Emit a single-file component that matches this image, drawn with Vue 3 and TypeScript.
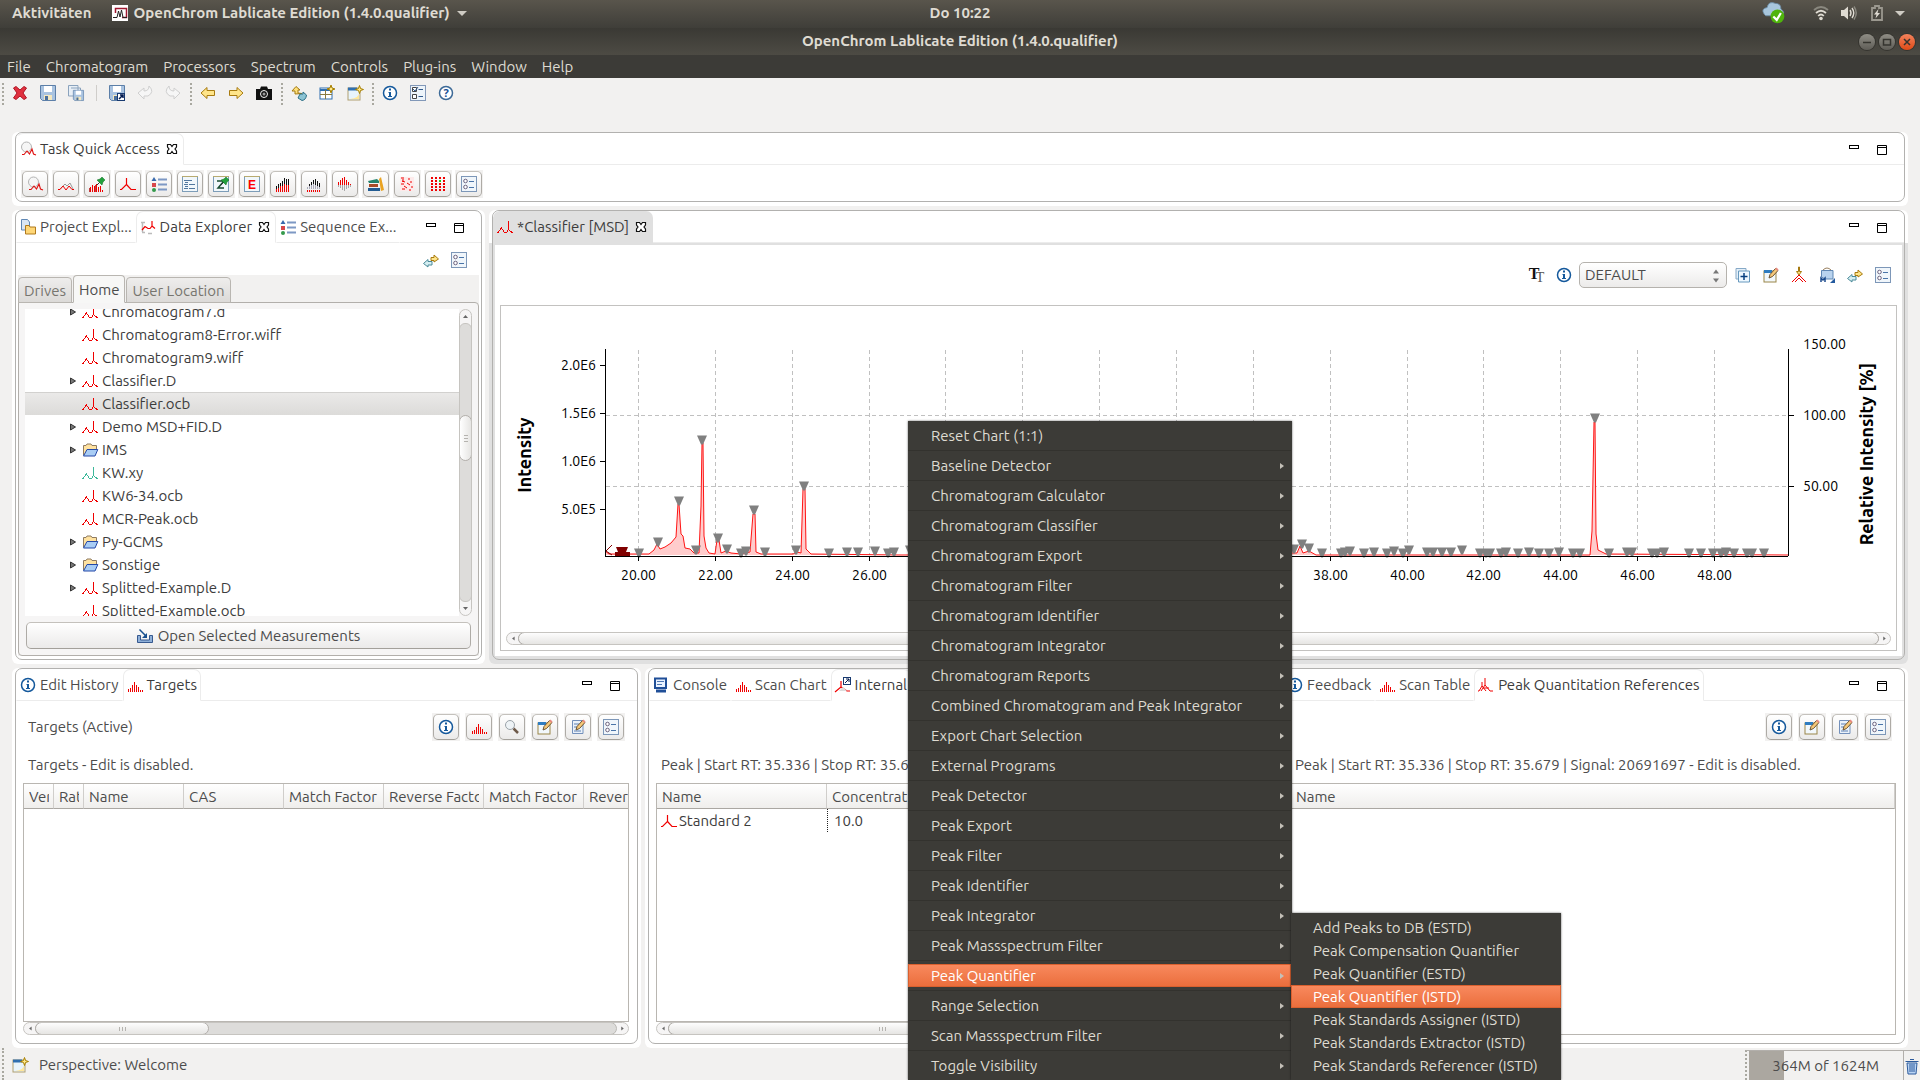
<script setup lang="ts">
import { h, ref } from 'vue'

const RED = '#f00000'
const line = (d: string, c: string, w = 1) =>
  `<path d="${d}" fill="none" stroke="${c}" stroke-width="${w}"/>`
const crisp = (d: string, c: string) =>
  `<path d="${d}" fill="none" stroke="${c}" shape-rendering="crispEdges"/>`
const box = (x: number, y: number, w: number, hh: number, c: string) =>
  `<rect x="${x}" y="${y}" width="${w}" height="${hh}" fill="${c}"/>`
const star = (x: number, y: number) =>
  `<path d="M${x} ${y - 4}L${x + 1} ${y - 1}L${x + 4} ${y}L${x + 1} ${y + 1}L${x} ${y + 4}L${x - 1} ${y + 1}L${x - 4} ${y}L${x - 1} ${y - 1}Z" fill="#ffe98a" stroke="#a87f00"/>`
const bars = (items: number[][], c: string) =>
  items.map(([x, y, hh]) => box(x, y, 1, hh, c)).join('')
const traceShape = 'M0 13.500H1L4.500 9L7.500 13.500H9.500L11.500 10.500V2V10.500L15.500 14'
const floppy = (x: number, y: number, s: number) =>
  `<g transform="translate(${x} ${y}) scale(${s})"><path d="M.5.5H15.500V15.500H2.500L.5 13.500Z" fill="#a9c3e0" stroke="#5c7fa8"/><rect x="4" y="1" width="8" height="6" fill="#fff"/><rect x="4" y="10" width="8" height="5" fill="#f4e8c0"/><rect x="5" y="11" width="3" height="4" fill="#4a6f9c"/></g>`
const pencil =
  '<path d="M6 11L7 7.500L12.500 1.500L15 3.500L9.500 9.500Z" fill="#f6c878" stroke="#6b5433"/><path d="M12 2L13.500.5L15.500 2.500L14.500 4Z" fill="#e88a80"/>'
const lens =
  '<circle cx="6" cy="6" r="4.500" fill="#eef3f6" stroke="#9aa2a8"/><path d="M9.500 9.500L14 14" stroke="#6e5a4a" stroke-width="2.500"/>'
const pin =
  '<path d="M8 9L11 6" stroke="#333"/><path d="M8 4L13 9L14 6L16 4L13 1L11 3Z" fill="#22a03c" stroke="#0c6a20" stroke-width=".5"/>'
const sheet = '<rect x=".5" y=".5" width="15" height="15" fill="#f1f7fb" stroke="#7d9db8"/><path d="M0 .5H16" stroke="#b8ab70"/>'

const icons: Record<string, string> = {
  del: '<path d="M1.500 3L4 1.500L8 5L12 1.500L14.500 3L11 8L14.500 13L12 14.500L8 11L4 14.500L1.500 13L5 8Z" fill="#e0313f" stroke="#b01524"/>',
  save: floppy(0, 0, 1),
  saveAll: `<path d="M.5.5H10V11H.5ZM3 3H12.500V13" fill="#e8eff6" stroke="#8ba3bd"/>${floppy(5, 5, 0.68)}`,
  saveAs: `${floppy(0, 0, 1)}<rect x="8.500" y="8.500" width="7" height="7" fill="#fff" stroke="#183a70"/>${line('M10 14L14 10M11 10H14V13', '#001a50', 1.5)}`,
  undo: '<path d="M1 8L7 3V6Q12 6 12 1Q18 7 11 11L7 11V14Z" fill="#f6f6f6" stroke="#cfcfcf"/>',
  redo: '<path d="M15 8L9 3V6Q4 6 4 1Q-2 7 5 11L9 11V14Z" fill="#f6f6f6" stroke="#cfcfcf"/>',
  back: '<path d="M1 8L7 2.500V5.500H14.500V10.500H7V13.500Z" fill="#ffe58a" stroke="#a87b10"/>',
  fwd: '<path d="M15 8L9 2.500V5.500H1.500V10.500H9V13.500Z" fill="#ffe58a" stroke="#a87b10"/>',
  camera: '<path d="M0 4H4L5 1.500H11L12 4H16V15H0Z" fill="#111"/><circle cx="8" cy="9" r="3.500" fill="none" stroke="#f2f1f0"/><circle cx="8" cy="9" r="1.500" fill="#999"/>',
  sync: '<path d="M1 6L5 1.500L9 5H7V8L11 8.500L4 9V6Z" fill="#ffe07a" stroke="#a37a12"/><path d="M7 13L9 9H12V7L15.500 10Q15 15 11 15.500Z" fill="#8cc4d4" stroke="#2c6f86"/>',
  persp: `<rect x="1" y="3" width="12" height="11" fill="#fff" stroke="#2f6fb0"/>${line('M1 5H13', '#2f6fb0', 2)}${line('M1 9.500H13M6.500 5V14', '#8a7b40')}${star(12, 4)}`,
  newWin: `<rect x="1" y="3" width="12" height="12" fill="#e8f4fc" stroke="#b0a070"/>${line('M1 4H10', '#2f6fb0', 3)}<path d="M3 14Q12 13 12 8V14Z" fill="#ffe79a"/>${star(12.5, 4.5)}`,
  info: '<circle cx="8" cy="8" r="6.500" fill="#fff" stroke="#15599c" stroke-width="1.500"/><path d="M7 3.500H9V5.500H7ZM6.500 7H9V11H10V12H6V11H7V8H6.500Z" fill="#15599c"/>',
  checks: '<rect x=".5" y=".5" width="15" height="15" fill="#edf4fa" stroke="#8298b8"/><path d="M2.500 2.500H6.500V6.500H2.500ZM2.500 9.500H6.500V13.500H2.500Z" fill="#fff" stroke="#444"/><path d="M3 4L5 6L8 2M8.500 4.500H13M8.500 11.500H13" fill="none" stroke="#325a8c"/>',
  help: '<circle cx="8" cy="8" r="6.500" fill="#fff" stroke="#3d6a97" stroke-width="1.500"/><text x="8" y="12" text-anchor="middle" font-size="11" font-weight="700" font-family="Noto Sans, sans-serif" fill="#174f94">?</text>',
  task: `<circle cx="6.500" cy="6" r="5" fill="#f6f6f6" stroke="#b4b4b4"/>${line('M2 13.500H4L7 10L9.500 13L12 8L13.500 13L16 14', '#e01010', 1.1)}`,
  overlay: `${line('M1 14L7 8L9 10L12 7L15 13', '#999')}${line('M0 13.500H2L5 10L8 14L11 10L14 13.500H16', RED)}`,
  histPin: `${bars([[1, 11, 5], [3, 9, 7], [5, 10, 6], [7, 8, 8], [9, 11, 5], [11, 10, 6], [13, 14, 2]], RED)}${bars([[0, 12, 4], [6, 9, 7]], '#c04040')}${pin}`,
  peak: line('M0 13.500H1.500L6.500 8.500V2M6.500 8.500L11 13.500H16', RED, 1.2),
  list: `${line('M7 3.500H16M7 8.500H16M7 13.500H16', '#7d98c4', 2)}<path d="M3 1L5.500 5H.5Z" fill="#3869ad"/>${box(1, 7, 4, 4, '#d8484c')}<circle cx="3" cy="14" r="2" fill="#349a4c"/>`,
  sheetList: `${sheet}${line('M2 4.500H10M2 8.500H6M7 8.500H13M2 12.500H6M7 12.500H13M3 6.500H6M3 10.500H6', '#51779e')}`,
  sheetPin: `${sheet}<path d="M4 5H11L5 12H11" fill="none" stroke="#174b30" stroke-width="1.500"/>${pin}`,
  sheetE: `${sheet}<text x="8" y="13" text-anchor="middle" font-size="12" font-weight="700" font-family="Liberation Sans, sans-serif" fill="#f00">E</text>`,
  bars1: bars([[1, 10, 3], [3, 8, 4], [5, 7, 3], [7, 5, 5], [9, 2, 6], [11, 3, 6], [13, 3, 6]], '#111') + bars([[1, 13, 3], [3, 12, 4], [5, 10, 6], [7, 10, 6], [9, 8, 8], [11, 9, 7], [13, 9, 7]], RED),
  bars2: bars([[3, 8, 2], [5, 6, 3], [7, 4, 4], [9, 3, 6], [11, 5, 5], [13, 7, 4]], '#111') + bars([[1, 11, 2], [3, 10, 3], [5, 9, 4], [7, 8, 5], [9, 9, 4], [11, 10, 3], [13, 11, 2]], '#aab') + bars([[1, 14, 2], [3, 14, 2], [5, 14, 2], [7, 14, 2], [9, 14, 2], [11, 14, 2], [13, 14, 2]], RED),
  bars3: bars([[1, 6, 3], [3, 4, 5], [5, 2, 7], [7, 1, 8], [9, 4, 5], [11, 6, 3], [13, 8, 1]], RED) + bars([[1, 9, 2], [3, 9, 3], [5, 9, 5], [7, 9, 6], [9, 9, 4], [11, 9, 3], [13, 9, 2]], '#aaa'),
  books: '<path d="M0 5L9 3L11 5V7L1 7Z" fill="#23836c"/><path d="M1 8H10V11H1Z" fill="#a84c28"/><path d="M0 12H12V15H0Z" fill="#235c92"/><path d="M11 3L13 1L16 14L13 15Z" fill="#eaa322"/>',
  noise: `<rect x="1" y="1" width="14" height="14" fill="#fdeaea"/>${line('M2 2H5M9 3H11M3 5L6 6M2 8H5M8 7L11 9M5 10L8 12M3 13H6M12 11H14M10 14H12M4 3V6M12 5V7', RED)}`,
  grid: [0, 1, 2, 3, 4].map((r) => [0, 1, 2, 3].map((c) => box(1 + c * 4, 1 + r * 3, 2, 2, r === 1 && c === 2 ? '#1ccf1c' : RED)).join('')).join(''),
  settings: '<rect x=".5" y=".5" width="15" height="15" fill="#f0f6fb" stroke="#7d97b8"/><circle cx="4.500" cy="5" r="1.800" fill="#fff" stroke="#6d6480"/><circle cx="4.500" cy="11" r="1.800" fill="#fff" stroke="#6d6480"/><path d="M8 5.500H13M8 11.500H13" stroke="#4a74a8"/>',
  close: '<path d="M3.500 3.500H6.500L8 5.500L9.500 3.500H12.500V6L11 8L12.500 10V12.500H9.500L8 10.500L6.500 12.500H3.500V10L5 8L3.500 6Z" fill="#fff" stroke="#111" stroke-width="1.200"/>',
  min: '<rect x="3.500" y="4.500" width="9" height="3" fill="#fff" stroke="#000"/>',
  max: '<path d="M3.500 4.500H12.500V13.500H3.500ZM3.500 6.500H12.500" fill="#fff" stroke="#000"/>',
  project: '<path d="M1.500.5H7.500L9.500 3V11H1.500Z" fill="#d9e6f4" stroke="#5f87b4"/><path d="M5.500 6.500H9L10 8H15.500V15H5.500Z" fill="#ffd777" stroke="#b07a1c"/>',
  data: `${line('M2.500 3V13M1 3.500H5M2 13.500H5M8 14.500H12', '#bbb', 1.5)}${line('M2 11L5 7.500L8 9.500H10L12 7V2M12 7L15 9.500', RED, 1.2)}`,
  link: '<path d="M8 5.500H11V3L15.500 7L11 10V8.500H8Z" fill="#ffe58a" stroke="#a87b10"/><path d="M9 9.500H5V7.500L.5 11.500L5 15V13H9Z" fill="#d5eef2" stroke="#4a8a99"/>',
  trace: crisp(traceShape, RED),
  traceGreen: crisp(traceShape, '#3cb89a'),
  folder: '<path d="M1.500 13V3.500H4L5 2H9L10 3.500H14.500V7" fill="#ffe2a0" stroke="#8f7b60"/><path d="M1.500 14L5 7.500H15.800L13 14Z" fill="#a9cdf5" stroke="#2448a8"/>',
  open: '<path d="M.5 7.500H3.500V12H12.500V7.500H15.500V14.500H.5Z" fill="#8fb0d8" stroke="#36598f"/><path d="M2.500 1.500L9 8" stroke="#17508f" stroke-width="1.500"/><path d="M10 5V10H5Z" fill="#17508f"/>',
  type: '<text x="6" y="12" text-anchor="middle" font-size="16" font-weight="700" font-family="Liberation Serif, serif" fill="#111">T</text><text x="12" y="15" text-anchor="middle" font-size="14" font-family="Liberation Serif, serif" fill="#555">T</text>',
  addWin: '<path d="M1 1.500H11V12H1Z" fill="#e4eff8" stroke="#86a9c7"/><path d="M3.500 4H14.500V15H3.500Z" fill="#eef8ff" stroke="#6798bd"/><path d="M9 6V13M5.500 9.500H12.500" stroke="#073f80" stroke-width="1.500"/>',
  edit: `<rect x="1" y="4" width="12" height="11" fill="#f2f8fc" stroke="#9a8648"/>${line('M1 4.500H9', '#2f7cc0', 3)}${pencil}`,
  editDoc: `<path d="M2.500 1.500H13V14.500H2.500Z" fill="#eaf1f9" stroke="#7390bb"/>${line('M4 5H9M4 8H8M4 12H11', '#5c80b4')}${pencil}`,
  integrate: `<path d="M8 8L5.500 4.500H7.500V0H8.500V4.500H10.500Z" fill="#ffe27a" stroke="#a67a10"/>${line('M1 15L8 8L15 15M4 15L8 11L12 15', RED)}`,
  method: '<path d="M2.500 3.500H14V12H6L2.500 10Z" fill="#b9d3ee" stroke="#5f87b4"/><path d="M4 3Q8-1 12 3" fill="none" stroke="#998060"/><path d="M2 15V11L4 13L6 11V15" fill="none" stroke="#1b4a8c" stroke-width="1.500"/><path d="M16 11V16H11Z" fill="#245a9e"/>',
  hist: bars([[1, 12, 3], [3, 11, 4], [5, 8, 7], [7, 5, 10], [9, 8, 7], [11, 10, 5], [13, 13, 2], [15, 13, 2]], RED),
  lens,
  console: '<path d="M2 1.500H13V11H2Z" fill="#eaf3ff" stroke="#204f98" stroke-width="2"/><path d="M4 4.500H11M4 7.500H9" stroke="#4f78b4"/><path d="M3 14H13" stroke="#204f98" stroke-width="3"/>',
  internal: `${line('M0 15L6 10V4M6 10L12 14H15', RED, 1.2)}<path d="M4 14L8 10L12 14Z" fill="#ddd"/><rect x="8.500" y=".5" width="7" height="7" fill="#fff" stroke="#183a70"/>${line('M10 6L14 2M11 2H14V5', '#001a50')}`,
  refs: line('M0 14H1L4 9V5M4 9L8 14M3 14L7 8V1M7 8L12 14H15M5 11H11', RED),
  trash: '<path d="M3 5H13L12 16H4Z" fill="#b9d3f3" stroke="#2d5b9c"/><path d="M1.500 3.500H14.500M6 1.500H10M6 6V14M8 6V14M10 6V14" stroke="#2d5b9c"/>',
  app: '<rect width="16" height="16" fill="#fff"/><path d="M3.500 8V3.500H14.500V12.500H10" fill="none" stroke="#a01830" stroke-width="1.500"/><path d="M1 12.500H5L6.500 6L8 12L9.500 5L11 12.500H15" fill="none" stroke="#222"/>',
  cloud: '<path d="M1 11Q-2 7 3 6Q4 1 9 3Q13 3 13 7Q17 10 13 12H2Z" fill="#a8c6dc" stroke="#6a8ca5" stroke-width=".6" transform="translate(0 -2)"/><circle cx="10.500" cy="10.500" r="5" fill="#4fb40c"/><path d="M7.500 10.500L10 13L13 8" fill="none" stroke="#fff" stroke-width="1.600"/>',
  wifi: '<path d="M1 5Q8-1 15 5" fill="none" stroke="#8a887f" stroke-width="1.800"/><path d="M3 8Q8 3.500 13 8M5.200 11Q8 8 10.800 11" fill="none" stroke="#dfdbd2" stroke-width="1.800"/><circle cx="8" cy="13.500" r="1.800" fill="#dfdbd2"/>',
  sound: '<path d="M0 5H3L7 1.500V14.500L3 11H0Z" fill="#dfdbd2"/><path d="M9 5Q11 8 9 11M11 3Q14.500 8 11 13" fill="none" stroke="#dfdbd2" stroke-width="1.400"/><path d="M13 1.500Q17.500 8 13 14.500" fill="none" stroke="#8a887f" stroke-width="1.400"/>',
  battery: '<path d="M3 3H6V1H10V3H13V15H3Z" fill="none" stroke="#9b988f" stroke-width="1.800"/><path d="M9.500 4L5 9.500H7.500L6.500 13.500L11 8H8.500Z" fill="#dfdbd2"/>',
  down: '<path d="M3 6H13L8 11Z" fill="#cfccc4"/>',
}

const Ico = (props: { n: string }) =>
  h('svg', { class: 'ico', viewBox: '0 0 16 16', 'aria-hidden': 'true', innerHTML: icons[props.n] })
Ico.props = ['n']

const appMenu = ['File', 'Chromatogram', 'Processors', 'Spectrum', 'Controls', 'Plug-ins', 'Window', 'Help']
const toolGroups = [
  ['del', 'save', 'saveAll', '|', 'saveAs', 'undo', 'redo'],
  ['back', 'fwd', 'camera'],
  ['sync', 'persp', 'newWin'],
  ['info', 'checks', 'help'],
]
const tasks = ['task', 'overlay', 'histPin', 'peak', 'list', 'sheetList', 'sheetPin', 'sheetE', 'bars1', 'bars2', 'bars3', 'books', 'noise', 'grid', 'settings']

interface Tab { icon: string; label: string; active?: boolean; close?: boolean }
const explorerTabs: Tab[] = [
  { icon: 'project', label: 'Project Expl...' },
  { icon: 'data', label: 'Data Explorer', active: true, close: true },
  { icon: 'list', label: 'Sequence Ex...' },
]
const targetTabs: Tab[] = [
  { icon: 'info', label: 'Edit History' },
  { icon: 'hist', label: 'Targets', active: true },
]
const consoleTabs: Tab[] = [
  { icon: 'console', label: 'Console' },
  { icon: 'hist', label: 'Scan Chart' },
  { icon: 'internal', label: 'Internal', active: true },
]
const referenceTabs: Tab[] = [
  { icon: 'info', label: 'Feedback' },
  { icon: 'hist', label: 'Scan Table' },
  { icon: 'refs', label: 'Peak Quantitation References', active: true },
]

const files = [
  { name: 'Chromatogram7.d', icon: 'trace', parent: true },
  { name: 'Chromatogram8-Error.wiff', icon: 'trace' },
  { name: 'Chromatogram9.wiff', icon: 'trace' },
  { name: 'Classifier.D', icon: 'trace', parent: true },
  { name: 'Classifier.ocb', icon: 'trace' },
  { name: 'Demo MSD+FID.D', icon: 'trace', parent: true },
  { name: 'IMS', icon: 'folder', parent: true },
  { name: 'KW.xy', icon: 'traceGreen' },
  { name: 'KW6-34.ocb', icon: 'trace' },
  { name: 'MCR-Peak.ocb', icon: 'trace' },
  { name: 'Py-GCMS', icon: 'folder', parent: true },
  { name: 'Sonstige', icon: 'folder', parent: true },
  { name: 'Splitted-Example.D', icon: 'trace', parent: true },
  { name: 'Splitted-Example.ocb', icon: 'trace' },
]
const selected = ref('Classifier.ocb')

const targetColumns = ['Veri', 'Rati', 'Name', 'CAS', 'Match Factor', 'Reverse Factor', 'Match Factor', 'Reverse']

const menu = [
  'Reset Chart (1:1)', 'Baseline Detector', 'Chromatogram Calculator', 'Chromatogram Classifier',
  'Chromatogram Export', 'Chromatogram Filter', 'Chromatogram Identifier', 'Chromatogram Integrator',
  'Chromatogram Reports', 'Combined Chromatogram and Peak Integrator', 'Export Chart Selection',
  'External Programs', 'Peak Detector', 'Peak Export', 'Peak Filter', 'Peak Identifier',
  'Peak Integrator', 'Peak Massspectrum Filter', 'Peak Quantifier', 'Range Selection',
  'Scan Massspectrum Filter', 'Toggle Visibility',
]
const submenu = [
  'Add Peaks to DB (ESTD)', 'Peak Compensation Quantifier', 'Peak Quantifier (ESTD)',
  'Peak Quantifier (ISTD)', 'Peak Standards Assigner (ISTD)', 'Peak Standards Extractor (ISTD)',
  'Peak Standards Referencer (ISTD)',
]

/* chart geometry */
const xTicks = Array.from({ length: 15 }, (_, i) => ({ x: Math.round(137 + i * 76.86) + 0.5, label: (20 + i * 2).toFixed(2) }))
const labelled = xTicks.filter((_, i) => i < 4 || i > 8)
const yTicks = [[59, '2.0E6'], [107, '1.5E6'], [155, '1.0E6'], [203, '5.0E5']] as [number, string][]
const rTicks = [[38, '150.00'], [109, '100.00'], [180, '50.00']] as [number, string][]
const marks = [
  [137, 247], [156, 236], [177, 195], [194, 244], [200, 134], [216, 232], [225, 243], [239, 247], [244, 245],
  [252, 204], [263, 246], [294, 244], [302, 180], [327, 247], [345, 246], [356, 246], [373, 245], [386, 247],
  [392, 246], [408, 244], [792, 243], [800, 238], [807, 242], [820, 247], [839, 247], [843, 246], [848, 245], [862, 247], [872, 246],
  [885, 247], [892, 245], [901, 247], [907, 244], [925, 246], [931, 246], [940, 246], [949, 246], [960, 244], [978, 247], [984, 247],
  [988, 247], [999, 247], [1004, 246], [1016, 247], [1027, 246], [1037, 247], [1047, 247], [1057, 246], [1071, 247], [1078, 247],
  [1093, 112], [1107, 247], [1125, 246], [1130, 246], [1150, 247], [1155, 247], [1162, 246], [1187, 247], [1199, 247], [1211, 247],
  [1219, 247], [1224, 246], [1232, 247], [1245, 247], [1250, 247], [1262, 247],
]
const tri = ([x, y]: number[]) => `M${x - 4} ${y - 4.5}h10l-4 9h-2z`
const markPath = marks.map(tri).join('')
const trace =
  '104,245 108,248 137,248 148,248 153,244 156,238 159,243 164,241 170,237 175,231 177,198 178,198 180,228 182,230 184,242 189,243 193,247 198,247 200,200 201,137 202,137 203,230 205,242 208,247 214,248 216,234 218,234 220,247 225,245 230,247 240,248 249,246 252,208 254,208 255,246 260,248 292,248 296,246 300,247 302,183 304,183 305,243 310,248 400,249 790,247 796,247 799,240 802,247 808,245 815,249 1089,249 1091,225 1093,116 1094,116 1095,228 1097,244 1105,248 1287,249'
</script>

<template>
  <div class="desktop">
    <header class="panel-bar">
      <div class="side">
        <button class="bar-text">Aktivitäten</button>
        <button class="bar-text app-name"><Ico n="app" />OpenChrom Lablicate Edition (1.4.0.qualifier)<Ico n="down" /></button>
      </div>
      <span class="bar-text">Do 10:22</span>
      <div class="side tray">
        <Ico n="cloud" class="cloud" /><Ico n="wifi" /><Ico n="sound" /><Ico n="battery" /><Ico n="down" />
      </div>
    </header>
    <div class="title-bar">
      <span></span>
      <h1>OpenChrom Lablicate Edition (1.4.0.qualifier)</h1>
      <div class="win-buttons">
        <button aria-label="Minimize"><svg viewBox="0 0 16 16"><path d="M4 8.500H12" /></svg></button>
        <button aria-label="Maximize"><svg viewBox="0 0 16 16"><path d="M4.500 5.500H11.500V11H4.500Z" /></svg></button>
        <button aria-label="Close" class="quit"><svg viewBox="0 0 16 16"><path d="M5 5L11 11M11 5L5 11" /></svg></button>
      </div>
    </div>
    <nav class="menu-bar"><button v-for="m in appMenu" :key="m">{{ m }}</button></nav>

    <div class="toolbar">
      <div v-for="(g, gi) in toolGroups" :key="gi" class="tool-group">
        <template v-for="t in g" :key="t">
          <span v-if="t === '|'" class="tool-sep"></span>
          <button v-else :aria-label="t"><Ico :n="t" /></button>
        </template>
      </div>
    </div>

    <main class="workspace">
      <section class="part">
        <div class="frame">
          <div class="tabs">
            <button class="tab active"><Ico n="task" /><span>Task Quick Access</span><Ico n="close" /></button>
            <div class="tab-rest"><button aria-label="Minimize"><Ico n="min" /></button><button aria-label="Maximize"><Ico n="max" /></button></div>
          </div>
          <div class="task-row">
            <span v-for="t in tasks" :key="t" class="push"><button :aria-label="t"><Ico :n="t" /></button></span>
          </div>
        </div>
      </section>

      <div class="row upper">
        <section class="part">
          <div class="frame">
            <div class="tabs">
              <button v-for="t in explorerTabs" :key="t.label" class="tab" :class="{ active: t.active }">
                <Ico :n="t.icon" /><span>{{ t.label }}</span><Ico v-if="t.close" n="close" />
              </button>
              <div class="tab-rest"><button aria-label="Minimize"><Ico n="min" /></button><button aria-label="Maximize"><Ico n="max" /></button></div>
            </div>
            <div class="view-tools"><button aria-label="Link"><Ico n="link" /></button><button aria-label="Settings"><Ico n="settings" /></button></div>
            <div class="folder">
              <div class="folder-tabs">
                <button>Drives</button><button class="current">Home</button><button>User Location</button>
              </div>
              <div class="folder-body">
                <div class="tree-wrap">
                  <ul class="tree">
                    <li v-for="f in files" :key="f.name">
                      <button :class="{ selected: f.name === selected }" @click="selected = f.name">
                        <svg class="twist" viewBox="0 0 8 8"><path v-if="f.parent" d="M.5 1L5.500 4L.5 7Z" /></svg>
                        <Ico :n="f.icon" />{{ f.name }}
                      </button>
                    </li>
                  </ul>
                  <div class="vbar">
                    <svg class="cap" viewBox="0 0 13 13"><path d="M4 8H9L6.500 5Z" /></svg>
                    <div class="vtrough"><div class="vthumb"><i></i><i></i><i></i></div></div>
                    <svg class="cap" viewBox="0 0 13 13"><path d="M4 5H9L6.500 8Z" /></svg>
                  </div>
                </div>
                <button class="open-btn"><Ico n="open" />Open Selected Measurements</button>
              </div>
            </div>
          </div>
        </section>

        <section class="part editor">
          <div class="frame">
            <div class="tabs">
              <button class="tab active"><Ico n="trace" /><span>*Classifier [MSD]</span><Ico n="close" /></button>
              <div class="tab-rest"><button aria-label="Minimize"><Ico n="min" /></button><button aria-label="Maximize"><Ico n="max" /></button></div>
            </div>
            <div class="editor-body">
              <div class="chart-tools">
                <button aria-label="Fonts"><Ico n="type" /></button>
                <button aria-label="Info"><Ico n="info" /></button>
                <div class="combo">
                  <select aria-label="Chart type"><option>DEFAULT</option></select>
                  <svg viewBox="0 0 8 14"><path d="M1 4.500H7L4 .5ZM1 9.500H7L4 13.500Z" /></svg>
                </div>
                <button v-for="t in ['addWin', 'edit', 'integrate', 'method', 'link', 'settings']" :key="t" :aria-label="t"><Ico :n="t" /></button>
              </div>
              <div class="chart-box">
                <svg class="chart" viewBox="0 0 1395 325" role="img" aria-label="Chromatogram">
                  <g class="grid">
                    <path v-for="t in xTicks" :key="t.label" :d="`M${t.x} 44V249`" />
                    <path d="M105 109.500H1287M105 180.500H1287" />
                  </g>
                  <polygon class="area" :points="`104,249 ${trace} 1287,249`" />
                  <polyline class="trace" :points="trace" />
                  <path class="mark" :d="markPath" />
                  <path class="dark" d="M115 241H127L125 246H129V250H114V246H117Z" />
                  <path class="dark-line" d="M111 239L105 245L111 249" />
                  <g class="axis">
                    <path d="M104.500 43V250M104 250.500H1287M1287.500 43V250" />
                    <path v-for="t in xTicks" :key="t.label" :d="`M${t.x} 250V255`" />
                    <path v-for="t in yTicks" :key="t[1]" :d="`M99 ${t[0] + 0.5}H104`" />
                    <path d="M1288 109.500H1293M1288 180.500H1293" />
                  </g>
                  <g class="labels">
                    <text v-for="t in labelled" :key="t.label" :x="t.x" y="274" text-anchor="middle">{{ t.label }}</text>
                    <text v-for="t in yTicks" :key="t[1]" x="95" :y="t[0] + 5" text-anchor="end">{{ t[1] }}</text>
                    <text v-for="t in rTicks" :key="t[1]" x="1302" :y="t[0] + 5">{{ t[1] }}</text>
                  </g>
                  <text class="axis-title" transform="translate(30 149) rotate(-90)" text-anchor="middle">Intensity</text>
                  <text class="axis-title" transform="translate(1372 148) rotate(-90)" text-anchor="middle">Relative Intensity [%]</text>
                </svg>
                <div class="hbar">
                  <svg class="cap" viewBox="0 0 13 13"><path d="M9 4V9L6 6.500Z" /></svg>
                  <div class="htrough"><div class="hthumb"></div></div>
                  <svg class="cap" viewBox="0 0 13 13"><path d="M5 4V9L8 6.500Z" /></svg>
                </div>
              </div>
            </div>
          </div>
        </section>
      </div>

      <div class="row lower">
        <section class="part">
          <div class="frame">
            <div class="tabs">
              <button v-for="t in targetTabs" :key="t.label" class="tab" :class="{ active: t.active }"><Ico :n="t.icon" /><span>{{ t.label }}</span></button>
              <div class="tab-rest"><button aria-label="Minimize"><Ico n="min" /></button><button aria-label="Maximize"><Ico n="max" /></button></div>
            </div>
            <div class="view-head">
              <span>Targets (Active)</span>
              <div class="pushes"><span v-for="t in ['info', 'hist', 'lens', 'edit', 'editDoc', 'settings']" :key="t" class="push"><button :aria-label="t"><Ico :n="t" /></button></span></div>
            </div>
            <p class="state">Targets - Edit is disabled.</p>
            <div class="grid-box">
              <table class="targets">
                <colgroup><col class="narrow" /><col class="narrow" /><col v-for="i in 6" :key="i" class="wide" /></colgroup>
                <thead><tr><th v-for="(c, i) in targetColumns" :key="i"><div>{{ c }}</div></th></tr></thead>
              </table>
            </div>
            <div class="hbar table-bar">
              <svg class="cap" viewBox="0 0 13 13"><path d="M9 4V9L6 6.500Z" /></svg>
              <div class="htrough"><div class="hthumb short"><i></i><i></i><i></i></div></div>
              <svg class="cap" viewBox="0 0 13 13"><path d="M5 4V9L8 6.500Z" /></svg>
            </div>
          </div>
        </section>

        <section class="part">
          <div class="frame">
            <div class="tabs">
              <button v-for="t in consoleTabs" :key="t.label" class="tab" :class="{ active: t.active }"><Ico :n="t.icon" /><span>{{ t.label }}</span></button>
              <div class="tab-rest"></div>
            </div>
            <div class="view-head"></div>
            <p class="state">Peak | Start RT: 35.336 | Stop RT: 35.679</p>
            <div class="grid-box">
              <table>
                <colgroup><col class="name-col" /><col /></colgroup>
                <thead><tr><th><div>Name</div></th><th><div>Concentration</div></th></tr></thead>
                <tbody><tr><td class="named"><Ico n="peak" />Standard 2</td><td>10.0</td></tr></tbody>
              </table>
            </div>
            <div class="hbar table-bar">
              <svg class="cap" viewBox="0 0 13 13"><path d="M9 4V9L6 6.500Z" /></svg>
              <div class="htrough"><div class="hthumb most"><i></i><i></i><i></i></div></div>
              <svg class="cap" viewBox="0 0 13 13"><path d="M5 4V9L8 6.500Z" /></svg>
            </div>
          </div>
        </section>

        <section class="part">
          <div class="frame">
            <div class="tabs">
              <button v-for="t in referenceTabs" :key="t.label" class="tab" :class="{ active: t.active }"><Ico :n="t.icon" /><span>{{ t.label }}</span></button>
              <div class="tab-rest"><button aria-label="Minimize"><Ico n="min" /></button><button aria-label="Maximize"><Ico n="max" /></button></div>
            </div>
            <div class="view-head">
              <span></span>
              <div class="pushes"><span v-for="t in ['info', 'edit', 'editDoc', 'settings']" :key="t" class="push"><button :aria-label="t"><Ico :n="t" /></button></span></div>
            </div>
            <p class="state">Peak | Start RT: 35.336 | Stop RT: 35.679 | Signal: 20691697 - Edit is disabled.</p>
            <div class="grid-box last">
              <table><thead><tr><th><div>Name</div></th></tr></thead></table>
            </div>
          </div>
        </section>
      </div>
    </main>

    <footer class="status">
      <div class="perspective"><Ico n="newWin" /><span>Perspective: Welcome</span></div>
      <div class="heap"><span>364M of 1624M</span></div>
      <button class="gc" aria-label="Run garbage collector"><Ico n="trash" /></button>
    </footer>

    <div class="context" role="menu">
      <button v-for="(m, i) in menu" :key="m" role="menuitem" :class="{ hot: m === 'Peak Quantifier' }">
        <span>{{ m }}</span><svg v-if="i > 0" viewBox="0 0 4 6"><path d="M0 0V6L4 3Z" /></svg>
      </button>
    </div>
    <div class="context sub" role="menu">
      <button v-for="m in submenu" :key="m" role="menuitem" :class="{ hot: m === 'Peak Quantifier (ISTD)' }"><span>{{ m }}</span></button>
    </div>
  </div>
</template>

<style>
body { background: #f2f1f0; }
</style>

<style scoped>
.desktop {
  position: relative;
  display: flex;
  flex-direction: column;
  min-height: 100vh;
  overflow: hidden;
  background: #f2f1f0;
  color: #4c4c4c;
  font: 15px/20px Ubuntu, "Noto Sans", sans-serif;
}
.desktop *, .desktop *::before, .desktop *::after { box-sizing: border-box; }
button { margin: 0; padding: 0; border: 0; background: none; color: inherit; font: inherit; white-space: nowrap; }
.ico { display: block; flex: none; width: 16px; height: 16px; overflow: visible; }

.panel-bar, .title-bar { display: grid; grid-template-columns: 1fr auto 1fr; align-items: center; color: #dfdbd2; }
.panel-bar { height: 28px; background: linear-gradient(#59554c, #3f3e39); padding: 0 12px 2px; }
.title-bar { height: 27px; background: linear-gradient(#3a3934, #4d4b44); padding: 0 5px; }
.bar-text { font-size: 15px; line-height: 24px; color: #dfdbd2; font-weight: 700; }
.side { display: flex; align-items: center; gap: 20px; }
.app-name { display: flex; align-items: center; gap: 6px; }
.app-name .ico:last-child { margin-left: -2px; }
.tray { justify-content: flex-end; gap: 12px; }
.tray .ico:last-child { margin-left: -5px; }
.cloud { width: 22px; height: 22px; margin-right: 16px; }
h1 { margin: 0; padding-bottom: 2px; font-size: 15px; line-height: 24px; font-weight: 700; }
.win-buttons { display: flex; justify-content: flex-end; gap: 4px; }
.win-buttons button { width: 16px; height: 16px; border-radius: 8px; background: linear-gradient(#8f8d85, #5f5d57); box-shadow: 0 0 0 1px #35342f; }
.win-buttons svg { display: block; width: 16px; height: 16px; fill: none; stroke: #35342f; stroke-width: 1.5; }
.win-buttons .quit { background: linear-gradient(#f3835d, #df4a16); }
.menu-bar { display: flex; gap: 15px; height: 23px; padding: 0 7px; background: #3c3b37; color: #dfdbd2; line-height: 24px; }

.toolbar { display: flex; height: 30px; padding-left: 2px; }
.tool-group { display: flex; align-items: center; gap: 12px; padding: 0 9px 0 10px; position: relative; }
.tool-group::before { content: ""; position: absolute; left: 0; top: 5px; height: 22px; border-left: 2px dotted #a9a8a0; }
.tool-sep { width: 1px; height: 16px; background: #cfcdca; }

.workspace { display: flex; flex-direction: column; flex: 1; gap: 4px; padding: 24px 12px 0; }
.part { display: flex; background: #fff; border-radius: 6px; padding: 0 3px 4px; min-width: 0; min-height: 0; }
.frame { display: flex; flex-direction: column; flex: 1; min-width: 0; border: 1px solid #b2b1af; border-radius: 7px; background: #fff; overflow: hidden; }
.row { display: grid; gap: 4px; }
.upper { grid-template-columns: 1fr 3fr; grid-template-rows: minmax(0, 1fr); height: 454px; }
.lower { grid-template-columns: 629fr 630fr 629fr; flex: 1; min-height: 380px; }

.tabs { display: flex; flex: none; height: 32px; }
.tab { display: flex; align-items: center; gap: 4px; padding: 0 3px; border: 1px solid transparent; border-bottom-color: #ececec; color: #4c4c4c; }
.tab.active { border-color: #ececec; border-bottom-color: transparent; border-radius: 7px 7px 0 0; color: #3c3c3c; }
.tab.active:first-child { border-left-color: transparent; }
.tab-rest { display: flex; flex: 1; align-items: center; justify-content: flex-end; gap: 12px; padding-right: 14px; border-bottom: 1px solid #ececec; }

.task-row { display: flex; gap: 3px; padding: 5px 5px 3px; }
.push { display: block; width: 28px; height: 28px; padding: 1px; background: #f2f1f0; }
.push button, .open-btn { border: 1px solid; border-color: #c4c1bc #aeaba6 #a3a09a; border-radius: 5px; background: linear-gradient(#fff, #ebeae9); }
.push button { display: flex; align-items: center; justify-content: center; width: 26px; height: 26px; }

.view-tools { display: flex; justify-content: flex-end; align-items: center; gap: 12px; height: 32px; padding: 2px 14px 0; }
.folder { display: flex; flex-direction: column; flex: 1; min-height: 0; margin: 0 2px 3px; background: #f2f1f0; }
.folder-tabs { display: flex; align-items: flex-end; gap: 1px; height: 28px; position: relative; z-index: 1; margin-bottom: -1px; }
.folder-tabs button { height: 26px; padding: 1px 5px 0; border: 1px solid #b9b6b1; border-radius: 4px 4px 0 0; background: linear-gradient(#eeedec, #dcdad8); color: #77756f; }
.folder-tabs .current { height: 28px; background: #f7f7f6; border-bottom-color: #f7f7f6; color: #4c4c4c; }
.folder-body { display: flex; flex-direction: column; gap: 6px; flex: 1; min-height: 0; padding: 6px; border: 1px solid #b2afab; border-radius: 0 4px 4px 4px; background: #f6f5f5; }
.tree-wrap { display: flex; flex: 1; min-height: 0; }
.tree { flex: 1; margin: 0; padding: 0; list-style: none; background: #fff; overflow: hidden; display: flex; flex-direction: column; }
.tree li { flex: none; }
.tree li:first-child { margin-top: -9px; }
.tree button { display: flex; align-items: center; gap: 4px; width: 100%; height: 23px; padding-left: 45px; color: #3c3c3c; }
.tree button.selected { background: linear-gradient(#ebeae9, #dcdbd9); box-shadow: inset 0 1px #d2d1cf; }
.twist { width: 8px; height: 8px; fill: #777; stroke: #333; }
.open-btn { display: flex; align-items: center; justify-content: center; gap: 5px; flex: none; height: 27px; margin: 0 1px; }

.cap { display: block; flex: none; width: 13px; height: 13px; fill: #666; }
.vbar { display: flex; flex-direction: column; width: 13px; border: 1px solid #c6c4c0; border-radius: 7px; background: #f6f5f5; overflow: hidden; }
.vbar .cap { margin-left: -1px; }
.vtrough { flex: 1; margin: 0 -1px; padding-top: 91px; border: 1px solid #c6c4c0; border-radius: 6px; background: #dddcda; }
.vthumb, .hthumb { display: flex; align-items: center; justify-content: center; border: 1px solid #b2afab; border-radius: 7px; gap: 2px; }
.vthumb { flex-direction: column; height: 46px; margin: 0 -1px; background: linear-gradient(90deg, #fff, #e6e5e3); }
.vthumb i { width: 4px; height: 1px; background: #b5b3af; }
.hbar { display: flex; height: 13px; border: 1px solid #c6c4c0; border-radius: 7px; background: #f6f5f5; overflow: hidden; }
.hbar .cap { margin-top: -1px; width: 11px; }
.htrough { flex: 1; margin: -1px 0; border: 1px solid #bab8b4; border-radius: 7px; background: #dddcda; }
.hthumb { height: 13px; margin: -1px; background: linear-gradient(#fdfdfd, #e6e5e3); }
.hthumb i { width: 1px; height: 4px; background: #b5b3af; }
.hthumb.short { width: 30%; }
.hthumb.most { width: 74%; }

.editor { background: linear-gradient(#fff 33px, #e0e0e0 33px); }
.editor .frame { background: #e0e0e0; }
.editor .tabs { background: #fff; }
.editor .tab { background: #e0e0e0; border-color: #e0e0e0; }
.editor-body { display: flex; flex-direction: column; flex: 1; margin: 2px 2px 3px; padding: 0 5px 5px; background: #fff; }
.chart-tools { display: flex; align-items: center; justify-content: flex-end; gap: 12px; height: 60px; padding: 0 6px 0 0; }
.combo { position: relative; width: 148px; margin: 0 -4px 0 -5px; }
.combo select { display: block; width: 100%; height: 26px; padding: 0 5px; appearance: none; border: 1px solid #b5b2ad; border-radius: 5px; background: linear-gradient(#fff, #ecebea); color: #4c4c4c; font: inherit; }
.combo svg { position: absolute; right: 7px; top: 7px; width: 8px; height: 14px; fill: #777; }
.chart-box { display: flex; flex-direction: column; justify-content: space-between; flex: 1; padding-bottom: 5px; border: 1px solid #c3c2c0; }
.chart { display: block; width: 100%; height: auto; }
.chart-box .hbar { margin: 0 5px; }
.grid path { stroke: #c0c0c0; stroke-dasharray: 4 3; fill: none; }
.area { fill: #ffcccc; }
.trace { fill: none; stroke: #ff1414; stroke-width: 1; }
.mark { fill: #808080; }
.dark { fill: #800000; }
.dark-line { fill: none; stroke: #800000; }
.axis path { stroke: #000; fill: none; }
.labels text { fill: #000; font-size: 14px; }
.axis-title { fill: #000; font-size: 18px; font-weight: 700; }

.view-head { display: flex; align-items: center; justify-content: space-between; height: 52px; padding: 0 12px; }
.pushes { display: flex; gap: 5px; }
.state { margin: 0; height: 30px; padding: 2px 12px 0; white-space: nowrap; overflow: hidden; }
.grid-box { flex: 1; margin: 0 8px 0 7px; border: 1px solid #b9b6b1; overflow: hidden; }
.grid-box.last { margin-bottom: 8px; }
.table-bar { flex: none; margin: 0 8px 8px 7px; }
table { width: 100%; table-layout: fixed; border-collapse: separate; border-spacing: 0; }
.targets { width: 660px; }
.narrow { width: 30px; }
.wide { width: 100px; }
.name-col { width: 170px; }
th { height: 25px; padding: 1px 4px 0 5px; border-right: 1px solid #d0cecb; border-bottom: 1px solid #aaa7a2; background: linear-gradient(#fff, #efeeec); font-weight: 400; text-align: left; white-space: nowrap; }
th div { overflow: hidden; }
td { height: 23px; padding: 0 6px; color: #3c3c3c; }
td + td { border-left: 1px dotted #222; }
.named .ico { display: inline-block; vertical-align: -3px; margin: 0 2px 0 -2px; }

.status { display: flex; height: 32px; padding-left: 2px; }
.perspective { display: flex; flex: 1; align-items: center; gap: 11px; padding: 2px 0 0 8px; border-left: 2px dotted #a9a8a0; }
.heap { display: flex; align-items: center; justify-content: flex-end; width: 158px; margin-top: 2px; padding: 0 24px 0 4px; border-left: 2px dotted #a9a8a0; border-top: 1px solid #b2afab; background: linear-gradient(90deg, #f2f1f0 2px, #aba7a0 2px, #aba7a0 37px, #f2f1f0 37px); }
.gc { width: 17px; margin-top: 2px; border-left: 1px solid #b2afab; border-top: 1px solid #b2afab; }

.context { position: absolute; left: 908px; top: 421px; display: flex; flex-direction: column; gap: 7px; width: 384px; padding: 3px 1px 3px 0; background: #3c3b37; color: #dfdbd2; box-shadow: 0 0 2px rgba(0, 0, 0, 0.6); }
.context button { position: relative; display: flex; align-items: center; justify-content: space-between; height: 23px; padding: 0 7px 0 23px; }
.context button svg { width: 4px; height: 6px; fill: #c4c0b8; }
.context button:not(:last-child)::after { content: ""; position: absolute; left: 0; right: 0; top: 26px; height: 1px; background: #33322e; }
.context button.hot { background: linear-gradient(#f98a5f, #ea6d3b); box-shadow: inset 0 0 0 1px #d9602f; color: #fff; }
.context.sub { left: 1291px; top: 913px; width: 270px; gap: 0; padding: 3px 0; }
.sub button { padding: 0 7px 0 22px; }
.context.sub button::after { display: none; }
</style>
